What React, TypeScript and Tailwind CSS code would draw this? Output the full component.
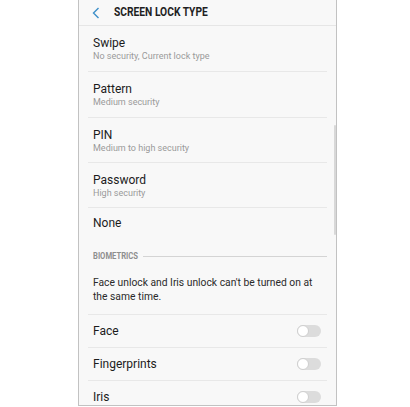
import React from 'react';

const lockTypes = [
  { title: 'Swipe', sub: 'No security, Current lock type', h: 'h-[46px]' },
  { title: 'Pattern', sub: 'Medium security', h: 'h-[46px]' },
  { title: 'PIN', sub: 'Medium to high security', h: 'h-[45px]' },
  { title: 'Password', sub: 'High security', h: 'h-[45px]' },
];

const biometrics = ['Face', 'Fingerprints', 'Iris'];

const Toggle: React.FC = () => (
  <div className="relative w-[24px] h-[12px] mr-[6px]">
    <div className="absolute inset-0 rounded-full bg-[#dcdcdc]" />
    <div className="absolute left-0 top-0 w-[12px] h-[12px] rounded-full bg-white border border-[#cfcfcf]" />
  </div>
);

const App: React.FC = () => {
  return (
    <div
      className="w-[410px] h-[407px] bg-white overflow-hidden"
      style={{ fontFamily: 'Roboto, "Liberation Sans", sans-serif' }}
    >
      <div className="relative ml-[78px] w-[259px] h-[406px] border-x border-b border-[#c2c2c2] bg-[#f8f8f8] overflow-hidden">
        {/* header */}
        <div className="flex items-center h-[26px] border-b border-[#e6e6e6]">
          <svg width="8" height="12" viewBox="0 0 8 12" className="ml-[13px] shrink-0">
            <path d="M6.5 1 L1.5 6 L6.5 11" fill="none" stroke="#3d8fc9" strokeWidth="1.4" />
          </svg>
          <span className="ml-[14px] text-[12.5px] font-bold text-[#1f1f1f] whitespace-nowrap origin-left scale-x-[0.82]">
            SCREEN LOCK TYPE
          </span>
        </div>

        {/* lock types */}
        {lockTypes.map((item) => (
          <div key={item.title} className={`mx-[9px] ${item.h} border-b border-[#e8e8e8] pt-[10px] pl-[5px]`}>
            <p className="text-[12px] leading-[14px] text-[#1c1c1c]">{item.title}</p>
            <p className="text-[9px] leading-[12px] text-[#9a9a9a]">{item.sub}</p>
          </div>
        ))}
        <div className="mx-[9px] h-[33px] pt-[8px] pl-[5px]">
          <p className="text-[12px] leading-[14px] text-[#1c1c1c]">None</p>
        </div>

        {/* biometrics */}
        <div className="mx-[9px] flex items-center pt-[10px] pl-[5px] h-[20px]">
          <span className="text-[8.5px] leading-[10px] font-bold text-[#8e8e8e] whitespace-nowrap origin-left scale-x-[0.9] -mr-[5px]">
            BIOMETRICS
          </span>
          <div className="flex-1 ml-[5px] h-px bg-[#d4d4d4]" />
        </div>
        <div className="mx-[9px] pl-[5px] pt-[15px] pb-[10px] border-b border-[#e8e8e8]">
          <p className="text-[10.3px] leading-[14px] text-[#2a2a2a]">
            Face unlock and Iris unlock can't be turned on at the same time.
          </p>
        </div>
        {biometrics.map((name) => (
          <div key={name} className="mx-[9px] h-[33px] pl-[5px] flex items-center justify-between border-b border-[#e8e8e8]">
            <span className="text-[12px] leading-[14px] text-[#1c1c1c]">{name}</span>
            <Toggle />
          </div>
        ))}

        {/* scrollbar */}
        <div className="absolute right-0 top-[125px] w-[2px] h-[110px] rounded-full bg-[#d8d8d8]" />
      </div>
    </div>
  );
};

export default App;
